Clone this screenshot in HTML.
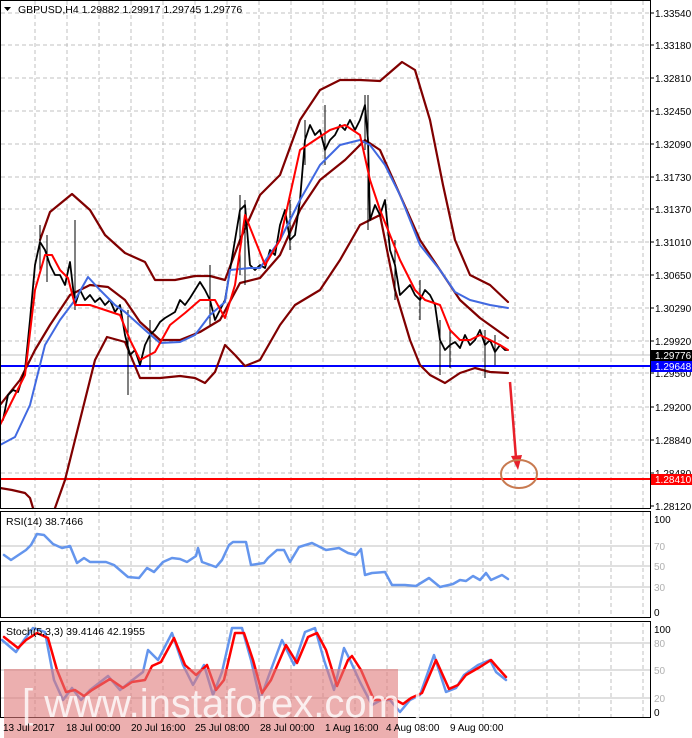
<!DOCTYPE html>
<html><head><meta charset="utf-8"><style>
html,body{margin:0;padding:0;background:#fff;}
svg{display:block;font-family:"Liberation Sans",sans-serif;}
polyline{stroke-linejoin:round;stroke-linecap:round;}
</style></head><body>
<svg width="692" height="738" viewBox="0 0 692 738" xmlns="http://www.w3.org/2000/svg">
<rect width="692" height="738" fill="#fff"/>
<g stroke="#c0c0c0" stroke-dasharray="4,3" stroke-width="1">
<path d="M35 1V508M67 1V508M99 1V508M131 1V508M163 1V508M195 1V508M227 1V508M259 1V508M291 1V508M323 1V508M355 1V508M387 1V508M419 1V508M451 1V508M483 1V508M515 1V508M547 1V508M579 1V508M611 1V508M643 1V508"/>
<path d="M35 512V617M67 512V617M99 512V617M131 512V617M163 512V617M195 512V617M227 512V617M259 512V617M291 512V617M323 512V617M355 512V617M387 512V617M419 512V617M451 512V617M483 512V617M515 512V617M547 512V617M579 512V617M611 512V617M643 512V617"/>
<path d="M35 623V717M67 623V717M99 623V717M131 623V717M163 623V717M195 623V717M227 623V717M259 623V717M291 623V717M323 623V717M355 623V717M387 623V717M419 623V717M451 623V717M483 623V717M515 623V717M547 623V717M579 623V717M611 623V717M643 623V717"/>
<path d="M1 13H650M1 45H650M1 78H650M1 111H650M1 144H650M1 177H650M1 209H650M1 242H650M1 275H650M1 308H650M1 341H650M1 373H650M1 407H650M1 440H650M1 473H650"/>
</g>
<g stroke="#c0c0c0" stroke-width="1">
<path d="M1 546H650M1 566H650M1 587H650"/>
<path d="M1 643H650M1 670H650M1 698H650"/>
<path d="M1 355H650"/>
</g>
<path d="M1 366H650" stroke="#0000ff" stroke-width="2"/>
<path d="M1 479H650" stroke="#ff0000" stroke-width="2"/>
<g fill="none" stroke="#800000" stroke-width="2.2">
<polyline points="40,240 50,212 72,194 90,210 105,235 125,253 145,262 155,280 175,280 195,276 210,276 225,280 240,240 260,195 280,175 300,120 320,90 340,80 360,80 380,81 402,62 415,70 430,120 443,185 455,240 470,275 490,285 508,302"/>
<polyline points="0,405 20,380 35,350 50,325 70,295 90,285 108,287 125,300 140,322 160,340 180,340 200,332 220,320 240,283 260,278 280,255 300,210 320,180 345,160 365,140 380,150 400,195 420,240 440,270 460,300 480,318 508,338"/>
<polyline points="55,508 65,480 80,420 95,360 107,337 125,342 140,378 160,378 180,376 195,378 205,383 215,372 225,345 235,355 245,366 260,360 280,325 295,305 320,290 340,260 360,225 380,215 395,290 410,340 420,365 430,375 445,383 460,373 475,368 490,372 508,373"/>
<polyline points="0,488 12,490 25,493 30,498 33,508"/>
</g>
<g fill="none" stroke="#000" stroke-width="1.8">
<polyline points="3,420 8,395 13,390 18,392 25,370 30,320 35,265 40,242 45,250 50,265 55,275 60,275 65,285 70,262 75,305 80,290 85,300 90,295 95,302 100,298 105,305 110,300 115,312 120,305 125,335 130,355 135,350 140,365 145,345 150,335 155,330 160,322 165,318 170,315 175,312 180,300 185,305 190,298 195,290 200,282 205,290 210,300 215,320 220,310 225,300 230,270 235,240 240,210 245,205 250,265 255,270 260,265 265,268 270,250 275,255 280,225 285,210 290,240 295,235 300,200 305,140 310,125 315,135 320,130 325,150 330,140 335,135 340,125 345,130 350,120 355,130 360,120 365,105 368,140 370,220 375,205 380,215 385,200 390,250 395,265 400,295 405,290 410,285 415,295 420,300 425,290 430,295 435,305 440,340 445,350 450,345 455,342 460,348 465,335 470,345 475,340 480,330 485,345 490,340 495,352 500,345 505,350 508,350"/>
</g>
<g stroke="#000" stroke-width="1">
<path d="M40 225V270M47 235V282M75 220V310M128 310V395M150 320V370M210 265V325M240 195V275M245 200V285M290 200V250M305 120V165M325 105V165M365 95V150M368 95V230M395 240V300M420 280V320M440 320V375M450 330V368M485 330V378M495 335V365"/>
</g>
<polyline fill="none" stroke="#4169e1" stroke-width="2" points="0,445 15,437 30,405 45,345 60,320 75,300 88,277 100,290 115,305 125,312 145,330 160,343 180,342 195,335 210,315 225,302 230,270 250,268 260,268 280,240 300,200 320,165 340,145 360,140 370,145 385,165 400,195 420,245 440,270 455,292 470,300 490,305 508,308"/>
<polyline fill="none" stroke="#ff0000" stroke-width="2" points="0,425 15,395 25,375 35,290 45,255 52,255 60,270 68,278 75,305 90,305 105,310 120,315 130,340 140,360 155,352 170,325 185,313 200,300 215,300 225,318 235,285 245,215 255,240 265,265 280,240 290,195 300,150 315,140 330,130 345,125 360,135 370,180 380,210 392,240 400,260 415,290 425,300 440,305 450,330 460,340 470,340 480,335 490,340 500,345 508,350"/>
<path d="M510 382L516 458" stroke="#e8202a" stroke-width="2.5"/>
<path d="M511 456L518 470L522 455Z" fill="#e8202a"/>
<ellipse cx="519" cy="474" rx="18" ry="14" fill="none" stroke="#c87a50" stroke-width="2"/>
<polyline fill="none" stroke="#6495ed" stroke-width="2.5" points="4,555 11,560 26,550 31,545 37,534 44,535 53,544 62,548 70,546 77,563 84,558 90,562 106,562 114,565 128,577 139,578 147,568 154,572 163,562 172,558 180,559 187,562 196,556 198,548 202,562 216,567 222,560 229,545 233,542 246,542 251,565 264,563 268,558 277,550 284,550 290,562 299,547 312,543 326,550 339,548 348,553 356,555 361,549 365,575 372,573 385,572 392,585 405,585 416,586 429,578 440,587 453,584 460,580 466,581 473,576 480,580 486,573 491,580 502,575 508,579"/>
<polyline fill="none" stroke="#6495ed" stroke-width="2.5" points="2,640 16,652 24,640 33,628 45,632 54,680 63,700 72,688 81,700 90,690 108,676 120,690 130,682 143,672 148,650 158,660 172,633 183,665 193,685 204,665 213,695 222,672 232,628 242,628 251,660 260,700 269,675 282,640 294,665 305,632 315,628 324,660 334,690 344,648 350,660 360,682 372,705 381,700 390,700 400,712 410,700 420,695 434,655 446,692 456,688 464,675 478,665 490,660 496,672 506,680"/>
<polyline fill="none" stroke="#ff0000" stroke-width="2.5" points="4,637 18,648 26,640 37,633 48,638 57,670 66,692 75,690 84,696 92,690 110,679 123,688 132,682 145,680 152,666 161,662 174,638 185,665 196,675 207,665 216,690 224,680 235,633 244,633 253,660 262,693 271,680 286,645 297,663 308,637 317,633 326,650 337,686 348,660 352,656 361,670 374,700 383,700 392,698 403,704 411,698 422,693 436,660 449,689 458,685 466,675 480,667 491,660 497,667 506,677"/>
<g fill="none" stroke="#000" stroke-width="1">
<rect x="0.5" y="0.5" width="650" height="508"/>
<rect x="0.5" y="511.5" width="650" height="106"/>
<rect x="0.5" y="621.5" width="650" height="96"/>
</g>
<rect x="4" y="669" width="394" height="69" fill="#e07a7a" fill-opacity="0.6"/>
<text x="22" y="717" font-size="40" fill="#fff" fill-opacity="0.8">[ www.instaforex.com ]</text>
<path d="M4 7L11 7L7.5 11Z" fill="#000"/>
<text x="18" y="13" font-size="10.5" fill="#000">GBPUSD,H4  1.29882 1.29917 1.29745 1.29776</text>
<text x="6" y="525" font-size="10.5" fill="#000">RSI(14) 38.7466</text>
<text x="6" y="635" font-size="10.5" fill="#000">Stoch(5,3,3) 39.4146 42.1955</text>
<g font-size="10" fill="#000">
<text x="655" y="17">1.33540</text><text x="655" y="49">1.33180</text><text x="655" y="82">1.32810</text><text x="655" y="115">1.32450</text><text x="655" y="148">1.32090</text><text x="655" y="181">1.31730</text><text x="655" y="213">1.31370</text><text x="655" y="246">1.31010</text><text x="655" y="279">1.30650</text><text x="655" y="312">1.30290</text><text x="655" y="345">1.29920</text><text x="655" y="377">1.29560</text><text x="655" y="411">1.29200</text><text x="655" y="444">1.28840</text><text x="655" y="477">1.28480</text><text x="655" y="510">1.28120</text>
</g>
<g stroke="#000"><path d="M650 13h4M650 45h4M650 78h4M650 111h4M650 144h4M650 177h4M650 209h4M650 242h4M650 275h4M650 308h4M650 341h4M650 373h4M650 407h4M650 440h4M650 473h4M650 506h4"/></g>
<rect x="651" y="350" width="41" height="11" fill="#000"/><text x="655" y="359" font-size="10" fill="#fff">1.29776</text>
<rect x="651" y="361" width="41" height="11" fill="#0000ff"/><text x="655" y="370" font-size="10" fill="#fff">1.29648</text>
<rect x="651" y="474" width="41" height="11" fill="#ff0000"/><text x="655" y="483" font-size="10" fill="#fff">1.28410</text>
<g font-size="10" fill="#000">
<text x="654" y="523">100</text><text x="654" y="616">0</text>
<text x="654" y="633">100</text><text x="654" y="716">0</text>
</g>
<g font-size="10" fill="#b0b0b0">
<text x="654" y="550">70</text><text x="654" y="570">50</text><text x="654" y="591">30</text>
<text x="654" y="647">80</text><text x="654" y="674">50</text><text x="654" y="702">20</text>
</g>
<g font-size="10" fill="#000">
<text x="3" y="731">13 Jul 2017</text><text x="66" y="731">18 Jul 00:00</text><text x="131" y="731">20 Jul 16:00</text><text x="195" y="731">25 Jul 08:00</text><text x="260" y="731">28 Jul 00:00</text><text x="325" y="731">1 Aug 16:00</text><text x="386" y="731">4 Aug 08:00</text><text x="450" y="731">9 Aug 00:00</text>
</g>
</svg>
</body></html>
